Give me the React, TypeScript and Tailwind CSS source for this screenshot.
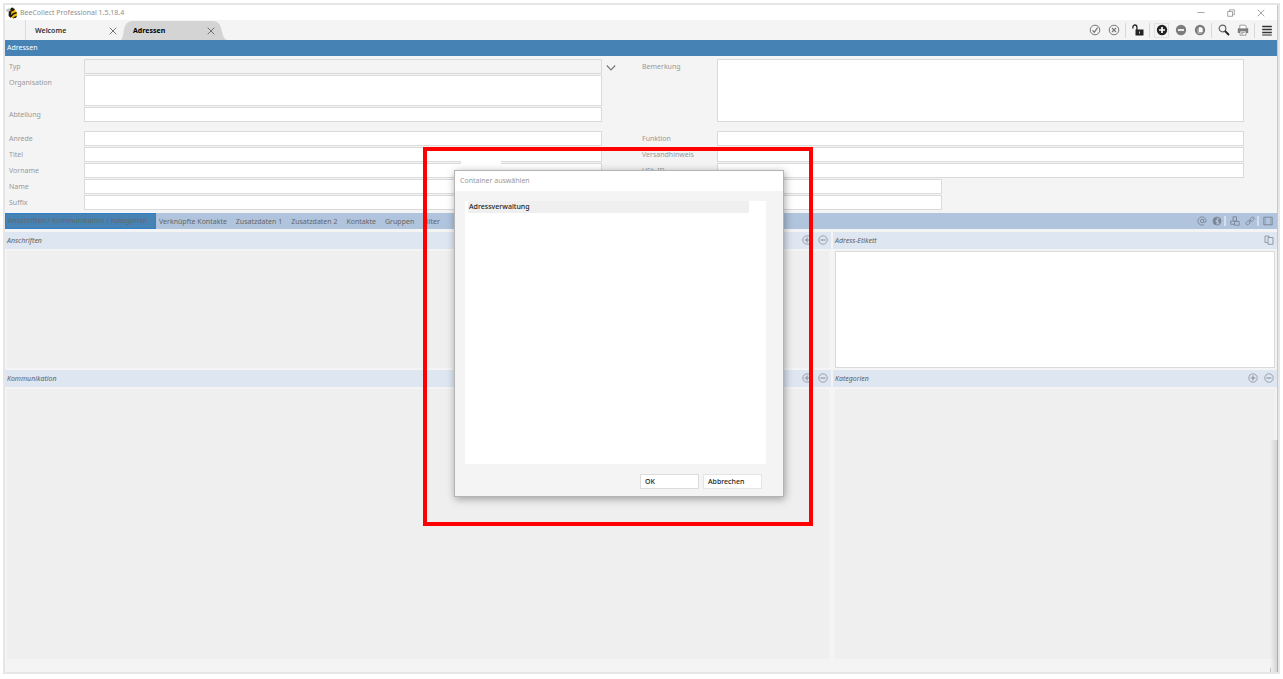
import React from 'react';
import { clsx } from 'clsx';

type IconProps = { className?: string };

function BeeLogo() {
  return (
    <svg className="w-3 h-3 shrink-0" viewBox="0 0 12 12" aria-hidden="true">
      <ellipse cx="2.8" cy="3" rx="2.8" ry="1.5" fill="#b9c2cc" transform="rotate(-12 3 3.2)" />
      <ellipse cx="7" cy="6.8" rx="4" ry="4.6" fill="#f2b90f" transform="rotate(-30 7 6.8)" />
      <path d="M3.4 5.2 8.6 2.2M5 9.6c1-2 2.6-3.4 5.600-3.800" stroke="#1d1a12" strokeWidth="1.4" fill="none" />
      <circle cx="6.2" cy="2.2" r="1.7" fill="#1d1a12" />
      <path d="M2.8 4.5 2.6 9l2.400 2 .2-6zM7 11.600c.6-1.400 1.800-2.400 4-2.800l-1 2z" fill="#1d1a12" />
    </svg>
  );
}

function CloseIcon({ className }: IconProps) {
  return (
    <svg className={className} viewBox="0 0 8 8" fill="none" stroke="currentColor" strokeWidth="0.8">
      <path d="M0.7 0.7 7.3 7.3M7.3 0.7 0.7 7.3" />
    </svg>
  );
}

function CirclePlus({ className }: IconProps) {
  return (
    <svg className={className} viewBox="0 0 10 10" fill="none" stroke="currentColor">
      <circle cx="5" cy="5" r="4.2" strokeWidth="0.8" />
      <path d="M5 2.5v5M2.5 5h5" strokeWidth="1.1" />
    </svg>
  );
}

function CircleMinus({ className }: IconProps) {
  return (
    <svg className={className} viewBox="0 0 10 10" fill="none" stroke="currentColor">
      <circle cx="5" cy="5" r="4.2" strokeWidth="0.8" />
      <path d="M2.5 5h5" strokeWidth="1.1" />
    </svg>
  );
}

function ToolButton({ label, active, children }: { label: string; active?: boolean; children: React.ReactNode }) {
  return (
    <button type="button" aria-label={label} className="w-[19px] h-4 flex items-center justify-center">
      <span className={clsx('w-[15px] h-[15px] flex items-center justify-center', active && 'border border-[#e2e2e2]')}>
        <svg className="w-3 h-3 shrink-0" viewBox="0 0 12 12" fill="none">
          {children}
        </svg>
      </span>
    </button>
  );
}

function ToolSeparator() {
  return <span className="w-px h-[15px] mx-0.5 bg-[#d8d8d8]" />;
}

function TitleBar() {
  return (
    <div className="h-[15px] bg-white flex items-center justify-between text-[#8f8f8f]">
      <div className="flex items-center gap-0.5 pl-px">
        <BeeLogo />
        <span>BeeCollect Professional 1.5.18.4</span>
      </div>
      <div className="flex pr-px">
        <button type="button" aria-label="Minimieren" className="w-[30px] h-[15px] flex items-center justify-center">
          <svg className="w-2 h-2" viewBox="0 0 8 8" stroke="currentColor" strokeWidth="0.8">
            <path d="M.5 3.5h7" />
          </svg>
        </button>
        <button type="button" aria-label="Wiederherstellen" className="w-[30px] h-[15px] flex items-center justify-center">
          <svg className="w-2 h-2" viewBox="0 0 8 8" fill="none" stroke="currentColor" strokeWidth="0.8">
            <path d="M.7 2.5h4.8v4.8H.7zM2.3 2.5V.8h5v4.9H5.5" />
          </svg>
        </button>
        <button type="button" aria-label="Schließen" className="w-[30px] h-[15px] flex items-center justify-center">
          <CloseIcon className="w-2 h-2" />
        </button>
      </div>
    </div>
  );
}

function Toolbar() {
  return (
    <div className="flex items-center pr-px">
      <ToolButton label="Übernehmen">
        <circle cx="6" cy="6" r="4.8" stroke="#777" strokeWidth="1" />
        <path d="m3.5 6.3 1.8 1.9 3.3-4.6" stroke="#777" strokeWidth="1.2" />
      </ToolButton>
      <ToolButton label="Verwerfen">
        <circle cx="6" cy="6" r="4.8" stroke="#777" strokeWidth="1" />
        <path d="m4 4 4 4M8 4 4 8" stroke="#777" strokeWidth="1.1" />
      </ToolButton>
      <ToolSeparator />
      <ToolButton label="Entsperren">
        <path d="M3.500 5.500h8v6h-8z" fill="#222" />
        <path d="M.9 4.500V3a2 2 0 0 1 4 0v3" stroke="#222" strokeWidth="1.3" />
        <path d="M7.5 7.500v2" stroke="#ccc" strokeWidth="1" />
      </ToolButton>
      <ToolSeparator />
      <ToolButton label="Neu" active>
        <circle cx="6" cy="6" r="5.2" fill="#222" />
        <path d="M6 3v6M3 6h6" stroke="#fff" strokeWidth="1.7" />
      </ToolButton>
      <ToolButton label="Löschen">
        <circle cx="6" cy="6" r="5.2" fill="#7c7c7c" />
        <path d="M3 6h6" stroke="#fff" strokeWidth="1.7" />
      </ToolButton>
      <ToolButton label="Duplizieren">
        <circle cx="6" cy="6" r="5.2" fill="#7c7c7c" />
        <path d="M4.8 3.3h2.5l1.4 1.400v3.600H4.8z" fill="#fff" />
        <path d="M4 4.500v4.700h3.500" stroke="#ddd" strokeWidth="0.7" />
      </ToolButton>
      <ToolSeparator />
      <ToolButton label="Suchen">
        <circle cx="4.500" cy="4.500" r="3.300" stroke="#666" strokeWidth="1.2" />
        <path d="m7 7 4 4" stroke="#222" strokeWidth="1.8" />
      </ToolButton>
      <ToolButton label="Drucken">
        <path d="M.8 4.200h10.400V9H.8z" fill="#7c7c7c" />
        <path d="M2.800 4.200V1.200h5.200l1.200 1v2" stroke="#888" fill="#fff" strokeWidth="0.8" />
        <path d="M3 7h6v4.200H3z" stroke="#888" fill="#fff" strokeWidth="0.8" />
        <path d="M4.200 8.400h3.600M4.200 9.800h2" stroke="#777" strokeWidth="0.7" />
      </ToolButton>
      <ToolSeparator />
      <ToolButton label="Menü">
        <path d="M1.200 2.500h9.600M1.200 5.500h9.600M1.200 8.500h9.600" stroke="#333" strokeWidth="1.600" />
        <path d="M1.200 11h9.600" stroke="#333" strokeWidth="1" />
      </ToolButton>
    </div>
  );
}

function DocumentTabs() {
  return (
    <div className="h-5 flex justify-between bg-[#f4f4f4]">
      <div className="flex pl-5">
        <div className="w-[96px] flex items-center justify-between pt-0.5 pl-[9px] pr-1 border-l border-[#dcdcdc]">
          <button type="button" className="font-semibold text-[#333]">Welcome</button>
          <button type="button" aria-label="Welcome schließen" className="text-[#555]">
            <CloseIcon className="w-2 h-2" />
          </button>
        </div>
        <div className="relative w-[106px] flex items-center justify-between pt-0.5 pl-3 pr-3">
          <svg className="absolute inset-0 w-full h-full" viewBox="0 0 106 20" preserveAspectRatio="none" aria-hidden="true">
            <path d="M0 20C3 17 2 10 4 6 6 2 9 1 14 1H91C97 1 99 4 100 8 102 15 102 18 106 20Z" fill="#d4d4d4" />
          </svg>
          <button type="button" className="relative font-bold text-black">Adressen</button>
          <button type="button" aria-label="Adressen schließen" className="relative text-[#555]">
            <CloseIcon className="w-2 h-2" />
          </button>
        </div>
      </div>
      <Toolbar />
    </div>
  );
}

const fieldClass = 'block w-full bg-white border border-[#dadada] resize-none outline-none';

function Label({ htmlFor, className, children }: { htmlFor: string; className?: string; children: React.ReactNode }) {
  return (
    <label htmlFor={htmlFor} className={clsx('h-[15px] leading-[15px] text-[#999]', className)}>
      {children}
    </label>
  );
}

function TextField({ id, label }: { id: string; label: string }) {
  return (
    <>
      <Label htmlFor={id} className={id === 'abteilung' ? 'col-start-1' : undefined}>{label}</Label>
      <input id={id} type="text" className={clsx(fieldClass, 'h-[15px]')} />
    </>
  );
}

function AddressForm() {
  return (
    <form className="py-[3px] pl-1 pr-[33px] bg-[#f4f4f4]">
      <div className="grid grid-cols-[75px_518fr_40px_75px_527fr] gap-y-px items-start">
        <Label htmlFor="typ">Typ</Label>
        <select id="typ" className="block w-full h-[15px] appearance-none bg-[#f4f4f4] border border-[#dadada] outline-none" />
        <svg className="w-2.5 h-2.5 ml-1 mt-1" viewBox="0 0 10 10" fill="none" stroke="#777" strokeWidth="1.1" aria-hidden="true">
          <path d="m.8 2.500 4.200 4.500 4.200-4.500" />
        </svg>
        <Label htmlFor="bemerkung">Bemerkung</Label>
        <textarea id="bemerkung" className={clsx(fieldClass, 'row-span-3 h-[63px]')} />
        <Label htmlFor="organisation">Organisation</Label>
        <textarea id="organisation" className={clsx(fieldClass, 'h-[31px]')} />
        <TextField id="abteilung" label="Abteilung" />
      </div>
      <div className="mt-[9px] grid grid-cols-[75px_518fr_40px_75px_527fr] gap-y-px">
        <TextField id="anrede" label="Anrede" />
        <span />
        <TextField id="funktion" label="Funktion" />
        <TextField id="titel" label="Titel" />
        <span />
        <TextField id="versandhinweis" label="Versandhinweis" />
        <TextField id="vorname" label="Vorname" />
        <span />
        <TextField id="ustid" label="USt. ID" />
      </div>
      <div className="mt-px grid grid-cols-[75px_858fr_302fr] gap-y-px">
        <TextField id="name" label="Name" />
        <span />
        <TextField id="suffix" label="Suffix" />
      </div>
    </form>
  );
}

const tabs = ['Verknüpfte Kontakte', 'Zusatzdaten 1', 'Zusatzdaten 2', 'Kontakte', 'Gruppen', 'Filter'];

function StripButton({ label, children }: { label: string; children: React.ReactNode }) {
  return (
    <button type="button" aria-label={label} className="w-[15px] h-4 flex items-center justify-center text-[#7b8594]">
      <svg className="w-2.5 h-2.5" viewBox="0 0 10 10" fill="none" stroke="currentColor" strokeWidth="0.9">
        {children}
      </svg>
    </button>
  );
}

function StripSeparator() {
  return <span className="w-0.5 h-2.5 mr-px bg-[#d5deea]" />;
}

function DetailTabs() {
  return (
    <div className="h-4 flex justify-between bg-[#b0c4de] text-[#666]">
      <div className="flex gap-[9px] whitespace-nowrap">
        <button type="button" className="w-[151px] -mr-1.5 pl-0.5 text-left bg-[#4682b4] border border-[#2f80c8]">
          Anschriften / Kommunikation / Kategorien
        </button>
        {tabs.map((tab) => (
          <button key={tab} type="button" className="pt-px">{tab}</button>
        ))}
      </div>
      <div className="flex items-center pr-0.5">
        <StripButton label="E-Mail">
          <circle cx="5" cy="5" r="1.700" />
          <path d="M6.700 3.300v2.600c0 1.200 2.400.9 2.400-.9A4.100 4.100 0 1 0 7 8.600" />
        </StripButton>
        <StripButton label="Webseite">
          <circle cx="5" cy="5" r="4" />
          <path d="M1.300 3.500 4 1.200l1.200 1L4.500 4 3 5l1.500 1.500L4 8.800 1.500 7zM6.800 2.500l1.700 1 .3 2-1.600 2L6.200 5z" fill="currentColor" strokeWidth="0.4" />
        </StripButton>
        <StripSeparator />
        <StripButton label="Verknüpfungen">
          <path d="M3 5V.8h3.500V5M3 5H.8v3.300h3.700M4.500 5.500h4.700v3.700H4.500zM3 5h3.500" />
        </StripButton>
        <StripButton label="Link">
          <rect x="4.700" y="1.700" width="4.600" height="3" rx="1.500" transform="rotate(-45 7 3.200)" />
          <rect x=".7" y="5.300" width="4.600" height="3" rx="1.500" transform="rotate(-45 3 6.800)" />
          <path d="m3.700 6.300 2.600-2.600" />
        </StripButton>
        <StripSeparator />
        <StripButton label="Ansicht">
          <path d="M.8 1.200h8.400v7.600H.8z" />
          <path d="M2.300 1.200v7.600M7.700 1.200v7.600" strokeWidth="0.5" />
        </StripButton>
      </div>
    </div>
  );
}

function SectionHeader({ title, children }: { title: string; children: React.ReactNode }) {
  return (
    <div className="h-[17px] pl-0.5 flex items-start justify-between bg-[#dee6f1] text-[#8a909a]">
      <h2 className="leading-[17px] italic text-[#606060]">{title}</h2>
      <div className="flex">{children}</div>
    </div>
  );
}

function SectionButton({ label, children }: { label: string; children: React.ReactNode }) {
  return (
    <button type="button" aria-label={label} className="w-4 h-4 flex items-center justify-center">{children}</button>
  );
}

function AddRemove({ name }: { name: string }) {
  return (
    <>
      <SectionButton label={`${name} hinzufügen`}><CirclePlus className="w-2.5 h-2.5" /></SectionButton>
      <SectionButton label={`${name} entfernen`}><CircleMinus className="w-2.5 h-2.5" /></SectionButton>
    </>
  );
}

function DetailPanels() {
  return (
    <div className="flex-1 pt-[3px] grid grid-cols-[826fr_444fr] grid-rows-[auto_1fr] gap-0.5 bg-[#f4f4f4]">
      <section>
        <SectionHeader title="Anschriften"><AddRemove name="Anschrift" /></SectionHeader>
        <div className="mt-0.5 mx-0.5 h-[117px] bg-[#efefef]" />
      </section>
      <section>
        <SectionHeader title="Adress-Etikett">
          <SectionButton label="Kopieren">
            <svg className="w-2.5 h-2.5" viewBox="0 0 10 10" fill="none" stroke="currentColor" strokeWidth="0.9">
              <path d="M3.500 7.500H1V1h4v1M4 2.500h5v6.800H4z" />
            </svg>
          </SectionButton>
        </SectionHeader>
        <div className="mt-0.5 mx-0.5">
          <textarea aria-label="Adress-Etikett" className={clsx(fieldClass, 'h-[117px]')} />
        </div>
      </section>
      <section className="flex flex-col">
        <SectionHeader title="Kommunikation"><AddRemove name="Kommunikation" /></SectionHeader>
        <div className="mt-0.5 mx-0.5 flex-1 bg-[#efefef]" />
      </section>
      <section className="flex flex-col">
        <SectionHeader title="Kategorien"><AddRemove name="Kategorie" /></SectionHeader>
        <div className="mt-0.5 mx-0.5 flex-1 bg-[#efefef]" />
      </section>
    </div>
  );
}

function ContainerDialog() {
  return (
    <div className="absolute left-[423px] top-[147px] w-[390px] h-[379px] border-4 border-[#ff0000] pt-[19px] pl-[27px]">
      <div className="absolute left-[34px] top-[7px] w-10 h-[9px] bg-white" />
      <div role="dialog" aria-labelledby="dialog-title" className="relative w-[330px] bg-[#f4f4f4] border border-[#b4b4b4] shadow-[1px_2px_8px_rgba(0,0,0,0.35)]">
        <h2 id="dialog-title" className="h-5 pl-[5px] leading-5 bg-white text-[#999]">Container auswählen</h2>
        <div className="pt-2.5 pl-2.5 pr-[17px] pb-[7px]">
          <ul className="h-[263px] pl-[3px] pr-[17px] bg-white">
            <li className="h-3 pl-px leading-3 bg-[#efefef] text-[#222] font-medium">Adressverwaltung</li>
          </ul>
          <div className="mt-2.5 pr-1 flex justify-end gap-1 text-[#222] font-medium">
            <button type="button" className="w-[59px] h-[15px] pl-1 text-left bg-white border border-[#dcdcdc]">OK</button>
            <button type="button" className="w-[59px] h-[15px] pl-1 text-left bg-white border border-[#e4e4e4]">Abbrechen</button>
          </div>
        </div>
      </div>
    </div>
  );
}

export default function App() {
  return (
    <div className="relative min-h-screen flex flex-col pt-[3px] pb-[5px] px-[3px] bg-white font-['Noto_Sans','Open_Sans',sans-serif] text-[7px] leading-[14px]">
      <main className="relative flex-1 flex flex-col border-2 border-[#e6e6e6]">
        <div className="flex-1 flex flex-col border-r border-[#c8c8c8]">
          <TitleBar />
          <DocumentTabs />
          <h1 className="h-4 pl-0.5 leading-4 bg-[#4682b4] text-white">Adressen</h1>
          <AddressForm />
          <DetailTabs />
          <DetailPanels />
          <footer className="h-[13px] pr-1.5 flex items-end justify-end bg-[#f4f4f4]">
            <span className="w-px h-1 bg-[#c4c4c4]" />
          </footer>
        </div>
        <div className="absolute right-0 bottom-0 top-[435px] w-2 bg-linear-to-r from-transparent to-black/15" />
      </main>
      <ContainerDialog />
    </div>
  );
}
